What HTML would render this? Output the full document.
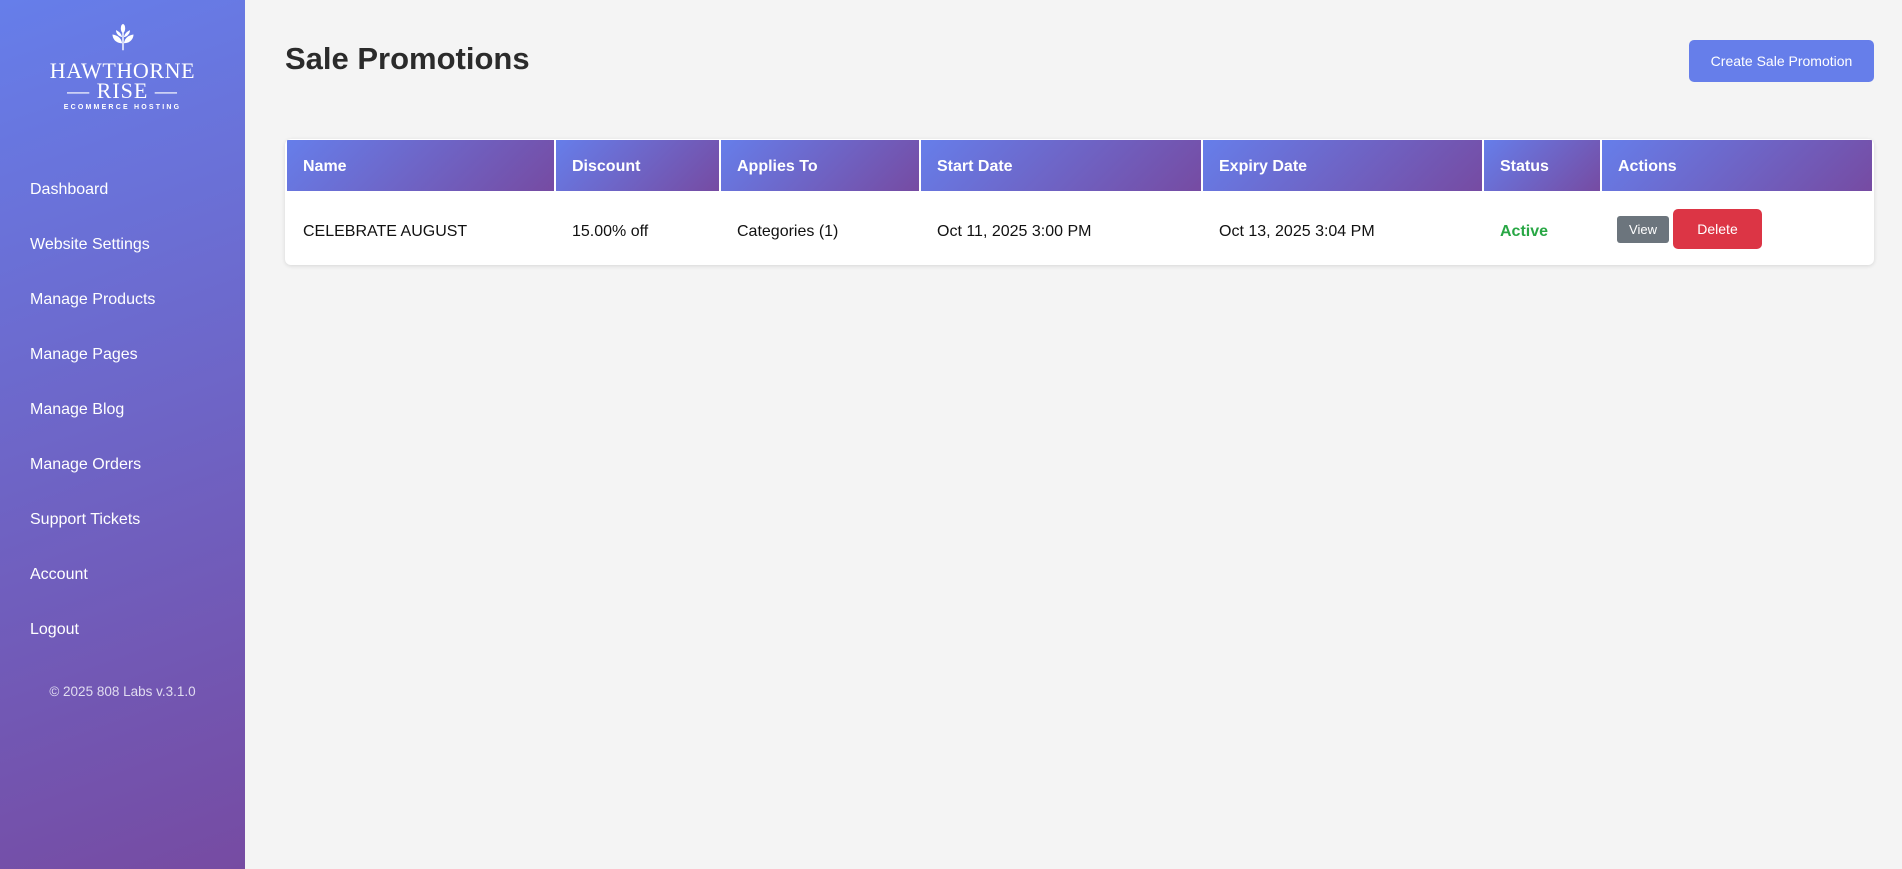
<!DOCTYPE html>
<html><head><meta charset="utf-8"><style>
*{box-sizing:border-box;margin:0;padding:0}
body{width:1902px;height:869px;background:#f4f4f4;font-family:"Liberation Sans",sans-serif;position:relative;overflow:hidden}
.sb{position:absolute;left:0;top:0;width:245px;height:869px;background:linear-gradient(160deg,#667eea 0%,#764ba2 100%);color:#fff}
.logo{position:absolute;left:0;width:245px;text-align:center;font-family:"Liberation Serif",serif}
.nav a{position:absolute;left:30px;font-size:16px;color:#fff;text-decoration:none}
.foot{position:absolute;top:684px;width:245px;text-align:center;font-size:13.5px;color:#e0dcf0}
h1{position:absolute;left:285px;top:41px;font-size:31px;font-weight:bold;color:#2b2b2b}
.btn{position:absolute;left:1689px;top:40px;width:185px;height:42px;background:#667eea;color:#fff;border-radius:5px;font-size:14px;text-align:center;line-height:42px}
.tbl{position:absolute;left:285px;top:139px;width:1589px;height:126px;background:#fff;border-radius:6px;box-shadow:0 1px 4px rgba(0,0,0,.12);overflow:hidden}
.th{position:absolute;top:1px;height:51px;background:linear-gradient(135deg,#667eea,#764ba2);color:#fff;font-weight:bold;font-size:16px;line-height:54px;padding-left:16px}
.td{position:absolute;top:52px;height:74px;line-height:82px;font-size:16px;color:#111;padding-left:16px}
</style></head><body>
<div class="sb">
 <svg style="position:absolute;left:109px;top:24px" width="28" height="28" viewBox="0 0 30 32" fill="#fff">
  <ellipse cx="15" cy="5" rx="2.5" ry="5"/>
  <path d="M14 22 C6 22 3 16 3 12 C9 13 13 16 14 22Z"/><path d="M16 22 C24 22 27 16 27 12 C21 13 17 16 16 22Z"/>
  <path d="M14 15 C9 14 7 10 7 7 C11 9 13 11 14 15Z"/><path d="M16 15 C21 14 23 10 23 7 C19 9 17 11 16 15Z"/>
  <rect x="14.2" y="8" width="1.6" height="22"/>
 </svg>
 <div class="logo" style="top:58px;font-size:22px;letter-spacing:0.6px">HAWTHORNE</div>
 <div class="logo" style="top:78px;font-size:22px;letter-spacing:1px">— RISE —</div>
 <div class="logo" style="top:104px;font-size:7px;letter-spacing:2.2px;font-family:'Liberation Sans',sans-serif;font-weight:bold">ECOMMERCE HOSTING</div>
 <div class="nav">
  <a style="top:181px">Dashboard</a><a style="top:236px">Website Settings</a><a style="top:291px">Manage Products</a>
  <a style="top:346px">Manage Pages</a><a style="top:401px">Manage Blog</a><a style="top:456px">Manage Orders</a>
  <a style="top:511px">Support Tickets</a><a style="top:566px">Account</a><a style="top:621px">Logout</a>
 </div>
 <div class="foot">© 2025 808 Labs v.3.1.0</div>
</div>
<h1>Sale Promotions</h1>
<div class="btn">Create Sale Promotion</div>
<div class="tbl">
 <div class="th" style="left:2px;width:267px">Name</div>
 <div class="th" style="left:271px;width:163px">Discount</div>
 <div class="th" style="left:436px;width:198px">Applies To</div>
 <div class="th" style="left:636px;width:280px">Start Date</div>
 <div class="th" style="left:918px;width:279px">Expiry Date</div>
 <div class="th" style="left:1199px;width:116px">Status</div>
 <div class="th" style="left:1317px;width:270px">Actions</div>
 <div class="td" style="left:2px">CELEBRATE AUGUST</div>
 <div class="td" style="left:271px">15.00% off</div>
 <div class="td" style="left:436px">Categories (1)</div>
 <div class="td" style="left:636px">Oct 11, 2025 3:00 PM</div>
 <div class="td" style="left:918px">Oct 13, 2025 3:04 PM</div>
 <div class="td" style="left:1199px;color:#28a745;font-weight:bold">Active</div>
 <div style="position:absolute;left:1332px;top:77px;width:52px;height:27px;background:#6c757d;color:#fff;border-radius:3px;font-size:13px;text-align:center;line-height:27px">View</div>
 <div style="position:absolute;left:1388px;top:70px;width:89px;height:40px;background:#dc3545;color:#fff;border-radius:5px;font-size:14px;text-align:center;line-height:40px">Delete</div>
</div>
</body></html>
